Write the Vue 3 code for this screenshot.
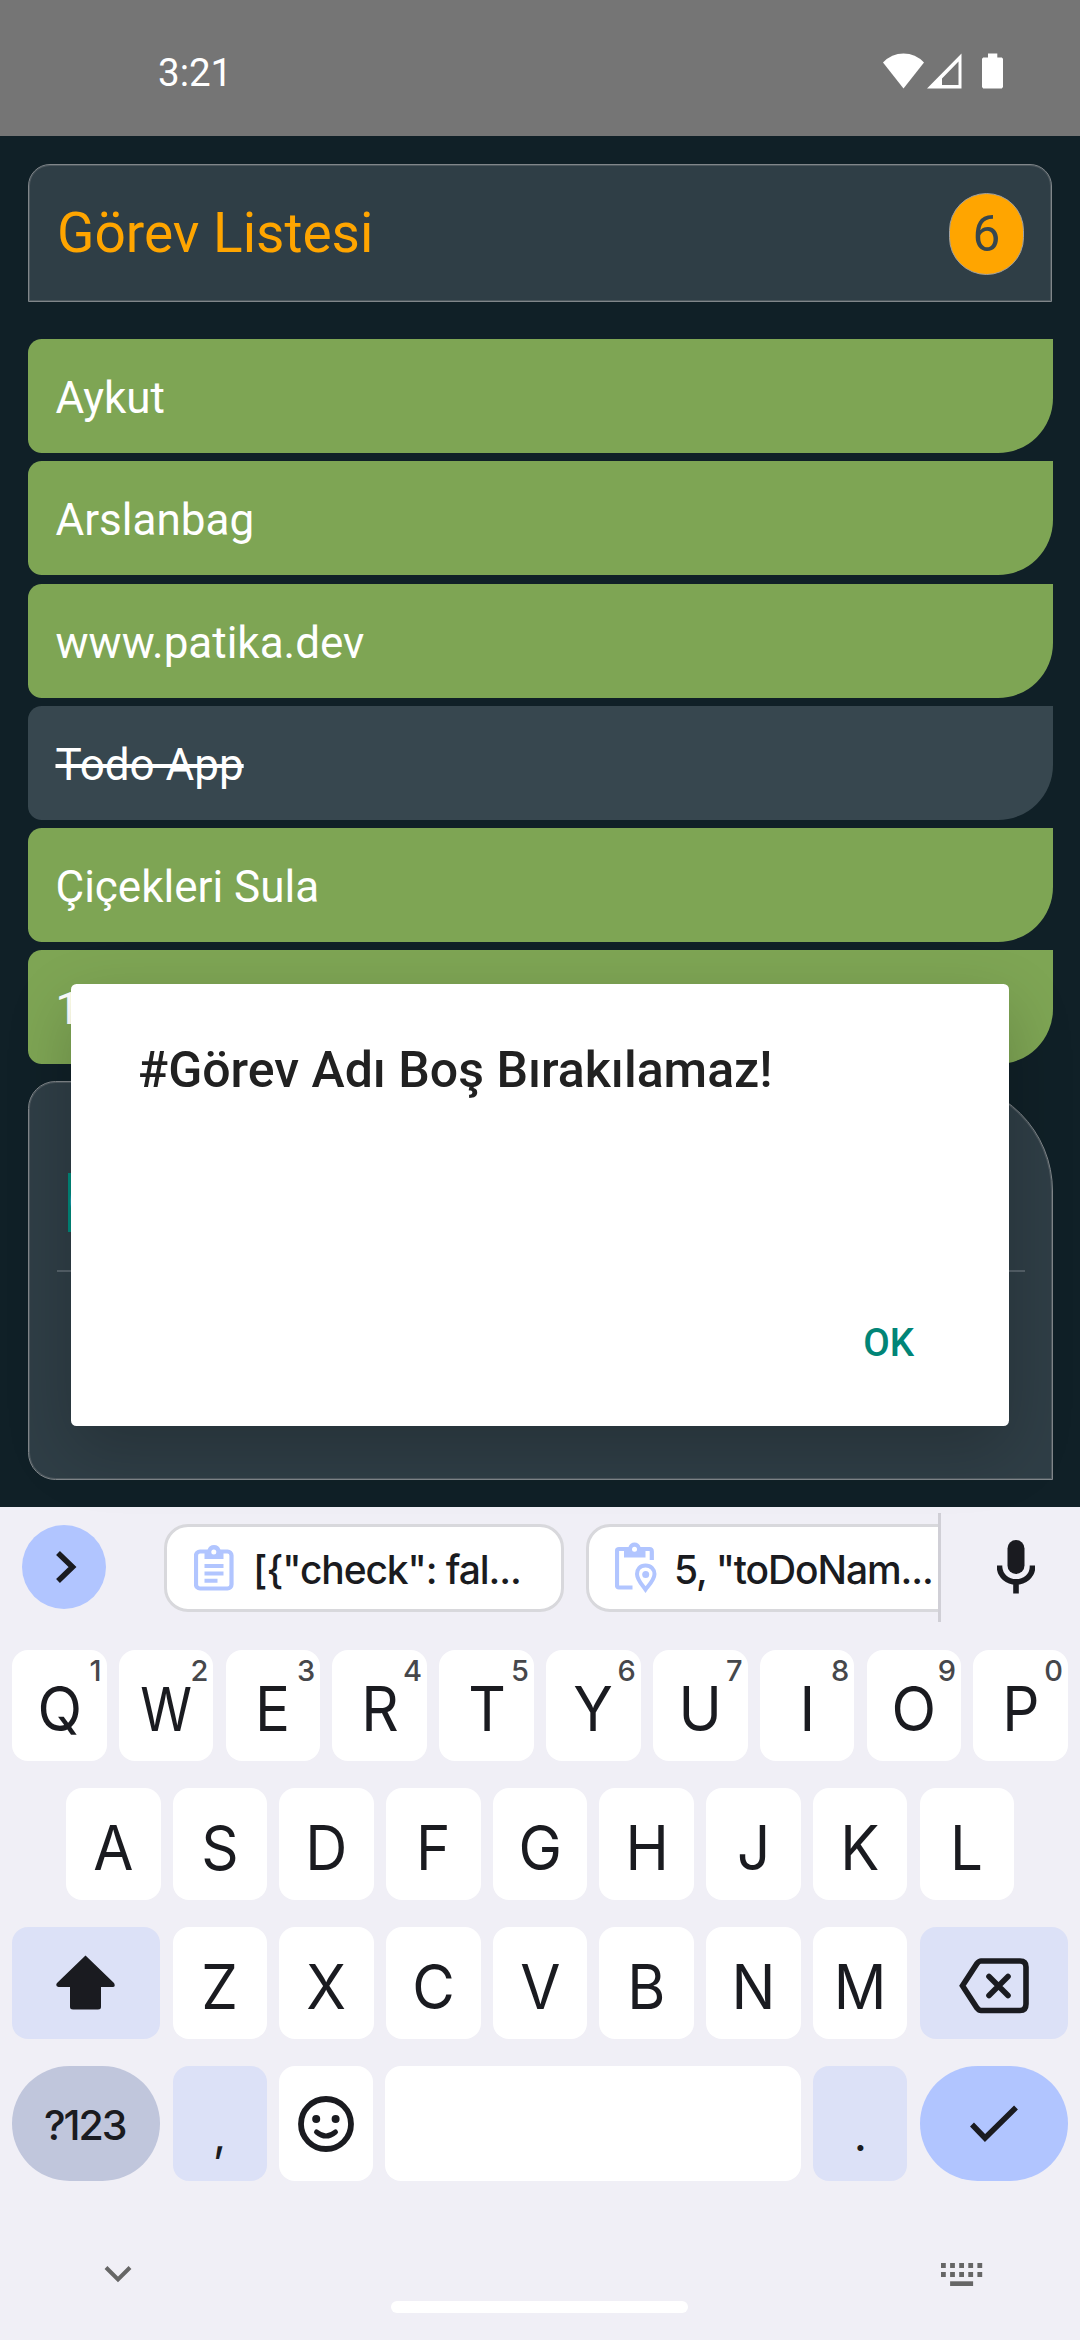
<script setup>
const tasks = [
  { name: 'Aykut', done: false },
  { name: 'Arslanbag', done: false },
  { name: 'www.patika.dev', done: false },
  { name: 'Todo App', done: true },
  { name: 'Çiçekleri Sula', done: false },
  { name: '1', done: false },
]
const topKeys = [...'QWERTYUIOP'].map((letter, i) => ({ letter, hint: (i + 1) % 10 }))
const homeKeys = [...'ASDFGHJKL']
const bottomKeys = [...'ZXCVBNM']
const dotColumns = [0, 9.1, 18.2, 27.3, 36.4]
</script>

<template>
  <div class="screen">
    <header class="status">
      <span class="clock">3:21</span>
      <div class="status-icons">
        <svg class="wifi" width="41" height="36" viewBox="0 0 41 36">
          <path d="M20.5 35.5 0 9.500Q8.500 .5 20.500 .5T41 9.500Z" />
        </svg>
        <svg class="signal" width="35" height="36" viewBox="0 0 35 36">
          <path fill-rule="evenodd" d="M0 35.500 34.500 .5V35.500ZM15 32H31.500V8.500L15 25.500Z" />
        </svg>
        <svg class="battery" width="21" height="36" viewBox="0 0 21 36">
          <path d="M6 .5h9.300v4h4.500L21 5.700V34l-1.200 1.500H1.200L0 34V5.700L1.200 4.500H6Z" />
        </svg>
      </div>
    </header>

    <main class="app">
      <section class="title-bar">
        <h1>Görev Listesi</h1>
        <span class="count">6</span>
      </section>
      <ul class="tasks">
        <li v-for="task in tasks" :key="task.name" :class="{ done: task.done }">{{ task.name }}</li>
      </ul>
      <section class="entry">
        <div class="field"><span class="selection">G</span></div>
      </section>
    </main>

    <section class="keyboard">
      <div class="suggestions">
        <button class="expand">
          <svg width="22" height="34" viewBox="0 0 22 34">
            <path d="M3 3 17.500 17 3 31" fill="none" stroke="#1a1b20" stroke-width="5.500" />
          </svg>
        </button>
        <div class="clips">
          <div class="chip first">
            <svg width="40" height="46" viewBox="0 0 40 46">
              <rect x="2" y="6.500" width="35.500" height="37" rx="4" fill="none" stroke="#b1c5ff" stroke-width="4.200" />
              <path d="M10.500 5H13.500Q15 0 20 0T26.500 5H29.500V14H10.500Z" fill="#b1c5ff" />
              <circle cx="19.800" cy="7" r="2.500" fill="#fff" />
              <path d="M10.500 21H29.500M10.500 28.500H29.500M10.500 35.800H23.500" stroke="#b1c5ff" stroke-width="4" />
            </svg>
            <span>[{"check": fal...</span>
          </div>
          <div class="chip second">
            <svg width="42" height="52" viewBox="0 0 42 52">
              <path d="M17.500 45.500H4Q2 45.500 2 43.500V9Q2 7 4 7H34.500Q36.800 7 36.800 9.500V18" fill="none" stroke="#b1c5ff" stroke-width="4.200" />
              <path d="M9 5H13.500Q15 .5 19.500 .5T25.500 5H30.500V15.500H9Z" fill="#b1c5ff" />
              <circle cx="19.500" cy="7.200" r="2.500" fill="#fff" />
              <path d="M30.500 23.500C24.800 23.500 22 27.500 22 32 22 38 28 44 30.500 47.500 33 44 39.500 38 39.500 32 39.500 27.500 36.200 23.500 30.500 23.500Z" fill="none" stroke="#b1c5ff" stroke-width="4" />
              <circle cx="30.700" cy="32.500" r="3.500" fill="#b1c5ff" />
            </svg>
            <span>5, "toDoNam...</span>
          </div>
        </div>
        <svg class="mic" width="38" height="54" viewBox="0 0 38 54">
          <rect x="10.500" y="0" width="17" height="34" rx="8.500" />
          <path d="M2.500 25.500V27C3 36 10.500 41.800 19 41.800S35.500 36 35.500 27V25.500M19 42V53.500" fill="none" stroke="#1a1b20" stroke-width="5.600" />
        </svg>
      </div>

      <div class="row top">
        <div v-for="key in topKeys" :key="key.letter" class="key">
          <span class="letter" :class="{ broad: key.letter === 'W' }">{{ key.letter }}</span>
          <small>{{ key.hint }}</small>
        </div>
      </div>
      <div class="row home">
        <div v-for="letter in homeKeys" :key="letter" class="key">
          <span class="letter">{{ letter }}</span>
        </div>
      </div>
      <div class="row bottom">
        <div class="key wide tinted">
          <svg width="60" height="56" viewBox="0 0 60 56">
            <path d="M29.500 .500 58 28Q60 32 56.500 32H45V52Q45 54.500 42 54.500H17Q14 54.500 14 52V32H2.500Q-1 31 1 28Z" fill="#1a1b20" />
          </svg>
        </div>
        <div v-for="letter in bottomKeys" :key="letter" class="key">
          <span class="letter">{{ letter }}</span>
        </div>
        <div class="key wide tinted backspace">
          <svg width="70" height="56" viewBox="0 0 70 56">
            <path d="M22 3H61Q67 3 67 9V46Q67 52.500 61 52.500H22Q20 52.500 18 50L3.500 27.700 18 5.500Q20 3 22 3Z" fill="none" stroke="#1a1b20" stroke-width="5.600" />
            <path d="M30 18.500 49 37.500M49 18.500 30 37.500" stroke="#1a1b20" stroke-width="5.600" stroke-linecap="round" />
          </svg>
        </div>
      </div>
      <div class="row actions">
        <div class="key wide symbols">?123</div>
        <div class="key tinted mark">,</div>
        <div class="key">
          <svg width="56" height="56" viewBox="0 0 56 56">
            <circle cx="28" cy="28" r="25" fill="none" stroke="#1a1b20" stroke-width="5.800" />
            <circle cx="18.200" cy="23" r="4" fill="#1a1b20" />
            <circle cx="37.600" cy="23" r="4" fill="#1a1b20" />
            <path d="M18.500 36Q28 44 37.500 36" fill="none" stroke="#1a1b20" stroke-width="5" stroke-linecap="round" />
          </svg>
        </div>
        <div class="key space"></div>
        <div class="key tinted mark">.</div>
        <div class="key wide enter">
          <svg width="48" height="38" viewBox="0 0 48 38">
            <path d="M2 19.500 15 33 46 2.500" fill="none" stroke="#1a1b20" stroke-width="5.500" />
          </svg>
        </div>
      </div>

      <footer class="nav">
        <svg width="28" height="18" viewBox="0 0 28 18">
          <path d="M2 2.500 14 14.500 26 2.500" fill="none" stroke="#666" stroke-width="4" />
        </svg>
        <div class="home-bar"></div>
        <svg width="42" height="23" viewBox="0 0 42 23" fill="#666">
          <template v-for="x in dotColumns" :key="x">
            <rect :x="x" y="0" width="4.800" height="5" />
            <rect :x="x" y="9" width="4.800" height="5" />
          </template>
          <rect x="9.100" y="18.300" width="23" height="4.700" />
        </svg>
      </footer>
    </section>

    <div class="dialog" role="alertdialog">
      <h2>#Görev Adı Boş Bırakılamaz!</h2>
      <button>OK</button>
    </div>
  </div>
</template>

<style>
body {
  margin: 0;
}
</style>

<style scoped>
* {
  box-sizing: border-box;
}
.screen {
  position: relative;
  display: flex;
  flex-direction: column;
  width: 1080px;
  height: 2340px;
  overflow: hidden;
  background: #102027;
  font-family: Roboto, sans-serif;
}
svg {
  display: block;
  flex: none;
}
button {
  border: 0;
  padding: 0;
  background: none;
  font-family: inherit;
}
.status {
  display: flex;
  justify-content: space-between;
  height: 136px;
  padding: 0 77px 0 158px;
  background: #757575;
  color: #fff;
}
.clock {
  padding-top: 10px;
  font-size: 38.5px;
  line-height: 126px;
}
.status-icons {
  display: flex;
  padding-top: 52.500px;
  fill: #fff;
}
.signal {
  margin: 0 20px 0 3.500px;
}
.app {
  height: 1371px;
  padding: 28px 27px 0 28px;
}
.title-bar {
  display: flex;
  align-items: center;
  justify-content: space-between;
  width: 1024px;
  height: 138px;
  padding: 0 27px 0 28px;
  border: 1px solid #80868a;
  border-radius: 22px 22px 0 0;
  background: #2f3e46;
  box-shadow: inset 0 0 0 1px #4d585e;
}
h1 {
  margin: 0;
  color: #ffa500;
  font-size: 55px;
  font-weight: 400;
  line-height: 64px;
}
.count {
  width: 75px;
  height: 82px;
  margin-top: 2px;
  border: 1px solid #a0a0a0;
  border-radius: 37.500px;
  background: #ffa500;
  color: #37474f;
  font-size: 49.5px;
  line-height: 80px;
  text-align: center;
}
.tasks {
  display: flex;
  flex-direction: column;
  gap: 8.250px;
  margin: 37px 0 17px;
  padding: 0;
  list-style: none;
}
.tasks li {
  height: 114px;
  padding: 4px 27.500px 0;
  border-radius: 13.750px 0 55px 13.750px;
  background: #7ea554;
  color: #fff;
  font-size: 44px;
  line-height: 110px;
}
.tasks .done {
  background: #37474f;
  text-decoration: line-through;
}
.entry {
  height: 399px;
  padding: 82px 27px 0 28px;
  border: 1px solid #80868a;
  border-radius: 27.500px 110px 0 27.500px;
  background: #2f3e46;
  box-shadow: inset 0 0 0 1px #4d585e;
}
.field {
  height: 108px;
  padding: 9px 11px 0;
  border-bottom: 2px solid #56626a;
}
.selection {
  display: inline-block;
  height: 59px;
  background: #00897b;
  color: #9fb0b4;
  font-size: 44px;
  line-height: 59px;
}
.keyboard {
  flex: 1;
  background: #f0eff6;
  color: #1a1b20;
  font-family: Inter, sans-serif;
}
.suggestions {
  display: flex;
  align-items: center;
  height: 120px;
  padding: 0 45px 0 22px;
}
.expand {
  display: flex;
  align-items: center;
  justify-content: center;
  width: 84px;
  height: 84px;
  padding-left: 3px;
  border-radius: 50%;
  background: #b1c5ff;
}
.clips {
  display: flex;
  gap: 22px;
  width: 777px;
  height: 109px;
  margin-left: 58px;
  padding-top: 11px;
  border-right: 3px solid #d0cfd6;
  overflow: hidden;
}
.chip {
  display: flex;
  flex: none;
  align-items: center;
  width: 400px;
  height: 88px;
  padding-left: 27px;
  border: 3px solid #d8d8dc;
  border-radius: 24px;
  background: #fff;
  font-size: 39px;
  font-weight: 500;
  letter-spacing: -1.100px;
  white-space: nowrap;
}
.chip span {
  padding-top: 4px;
}
.first span {
  margin-left: 19px;
}
.second {
  padding-left: 26px;
}
.second span {
  margin-left: 17px;
}
.mic {
  margin: 0 0 0 auto;
  fill: #1a1b20;
}
.row {
  display: flex;
  gap: 12.200px;
  height: 112px;
  padding: 0 12px;
  margin-bottom: 27px;
}
.row.top {
  height: 111px;
  margin-top: 23px;
}
.row.home {
  padding: 0 66px;
}
.key {
  position: relative;
  display: flex;
  flex: 1 1 0;
  align-items: center;
  justify-content: center;
  padding-top: 6px;
  border-radius: 16px;
  background: #fff;
  font-size: 62px;
}
.key svg {
  margin-top: -6px;
}
.key.backspace svg {
  margin-top: -1px;
}
.letter {
  font-weight: 400;
  transform: scaleX(0.94);
}
.letter.broad {
  font-size: 61px;
  transform: scaleX(0.86);
}
.key small {
  position: absolute;
  top: 5.500px;
  right: 5px;
  color: #46474b;
  font-size: 29px;
  font-weight: 500;
  line-height: 30px;
}
.key.wide {
  flex: 0 0 148.400px;
}
.key.tinted {
  background: #dce1f7;
}
.row.actions {
  height: 115px;
  margin: 0;
}
.key.symbols {
  padding: 3px 3px 0 0;
  border-radius: 58px;
  background: #c0c6dc;
  font-size: 41px;
  font-weight: 500;
  letter-spacing: -2px;
}
.key.mark {
  padding-top: 21px;
  font-size: 46px;
}
.key.space {
  flex: 0 0 416px;
}
.key.enter {
  border-radius: 58px;
  background: #b1c5ff;
}
.nav {
  display: flex;
  align-items: flex-start;
  justify-content: space-between;
  padding: 82px 97px 0 104px;
}
.nav svg:first-child {
  margin-top: 2px;
}
.home-bar {
  width: 297px;
  height: 12px;
  margin: 38px 0 0 5px;
  border-radius: 6px;
  background: #fff;
}
.dialog {
  position: absolute;
  top: 984px;
  left: 71px;
  display: flex;
  flex-direction: column;
  align-items: flex-start;
  justify-content: space-between;
  width: 938px;
  height: 442px;
  padding: 56px 95px 60px 67px;
  border-radius: 5.500px;
  background: #fff;
  box-shadow: 0 24px 66px rgba(0, 0, 0, 0.2);
}
h2 {
  margin: 0;
  color: #212121;
  font-size: 50px;
  font-weight: 500;
  line-height: 60px;
  white-space: nowrap;
}
.dialog button {
  align-self: flex-end;
  color: #018577;
  font-size: 38.5px;
  font-weight: 500;
  line-height: 46px;
}
</style>
